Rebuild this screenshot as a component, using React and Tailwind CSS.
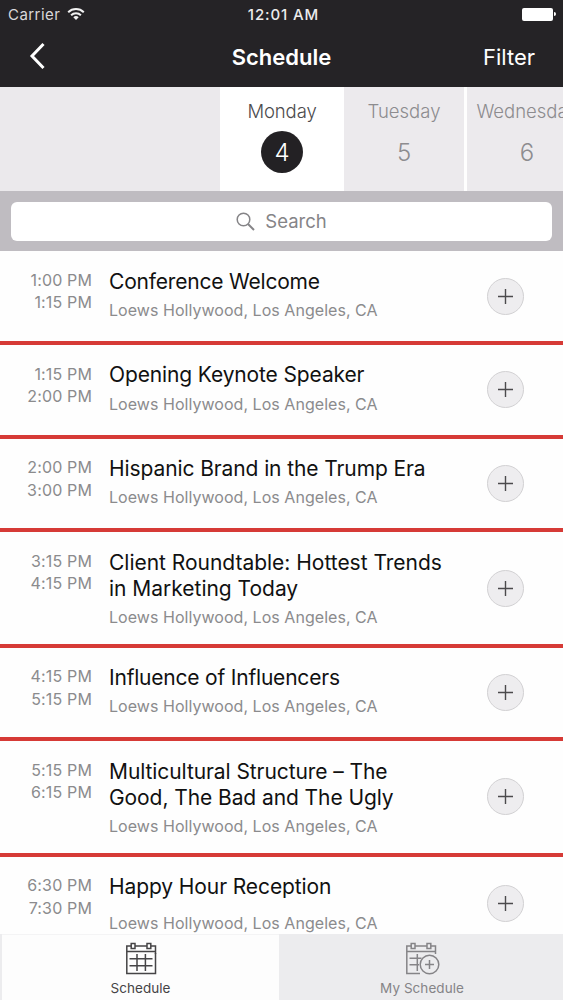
const sessions = [
  { start: '1:00 PM', end: '1:15 PM', title: ['Conference Welcome'], tracking: 'tracking-[-0.19px]' },
  { start: '1:15 PM', end: '2:00 PM', title: ['Opening Keynote Speaker'], tracking: 'tracking-[-0.13px]' },
  { start: '2:00 PM', end: '3:00 PM', title: ['Hispanic Brand in the Trump Era'], tracking: 'tracking-[-0.1px]' },
  { start: '3:15 PM', end: '4:15 PM', title: ['Client Roundtable: Hottest Trends', 'in Marketing Today'], tracking: 'tracking-[-0.02px]' },
  { start: '4:15 PM', end: '5:15 PM', title: ['Influence of Influencers'], tracking: 'tracking-[-0.2px]' },
  { start: '5:15 PM', end: '6:15 PM', title: ['Multicultural Structure – The', 'Good, The Bad and The Ugly'], tracking: 'tracking-[-0.08px]' },
  { start: '6:30 PM', end: '7:30 PM', title: ['Happy Hour Reception'], tracking: 'tracking-[-0.1px]' },
];

const days = [
  { name: 'Tuesday', date: 5, box: 'w-[120px]' },
  { name: 'Wednesday', date: 6, box: 'w-[120px] ml-[3px]' },
];

function StatusBar() {
  return (
    <div className="h-7 grid grid-cols-3 items-center text-[15px] leading-none">
      <div className="flex items-center gap-[7px] pl-2 text-[#d9d8da]">
        <span className="tracking-[0.45px]">Carrier</span>
        <svg width="18" height="14" viewBox="0 0 18 14" fill="none" stroke="#f2f2f2" strokeWidth="2">
          <path d="M1.2 5.2a11.2 11.2 0 0 1 15.6 0" />
          <path d="M4.1 8.3a7 7 0 0 1 9.8 0" />
          <path d="M9 12.9 6.3 10.2a3.9 3.9 0 0 1 5.4 0z" fill="#f2f2f2" stroke="none" />
        </svg>
      </div>
      <span className="pl-1 text-center font-medium tracking-[0.9px] text-[#ececec]">12:01 AM</span>
      <div className="flex items-center justify-end pr-[7px]">
        <span className="w-[31px] h-[13px] rounded-[2px] bg-white" />
        <span className="w-[2px] h-1 ml-px rounded-r bg-white" />
      </div>
    </div>
  );
}

function CalendarIcon({ add }) {
  return (
    <svg width="36" height="34" viewBox="0 0 36 34" fill="none" stroke="currentColor" strokeWidth="1.5">
      <path d="M6 4H1.8v27.5H15M10 4h12M26 4h4.5v8M1.8 9.5h28.7" />
      <rect x="6.2" y="1.5" width="3.8" height="5" />
      <rect x="22" y="1.5" width="3.8" height="5" />
      {add ? (
        <>
          <path d="M4.5 16.2h12M4.5 22.8h9.5M12.3 12v17" />
          <circle cx="24.5" cy="22.5" r="9.3" />
          <path d="M24.5 18v9M20 22.5h9" />
        </>
      ) : (
        <path d="M15 31.5h15.5V11M4.5 16.7h23M4.5 23.7h23M12 12v17M20.4 12v17" />
      )}
    </svg>
  );
}

function SessionRow({ session, last }) {
  const height = session.title.length > 1 ? 'h-[115.3px]' : 'h-[93.7px]';
  return (
    <li className={`flex ${height} ${last ? '' : 'border-b-4 border-[#d63a36]'}`}>
      <div className="w-[92px] pt-[17.7px] text-right text-base leading-[22.4px] tracking-[0.15px] text-[#8b8b8d]">
        <p>{session.start}</p>
        <p>{session.end}</p>
      </div>
      <div className="flex-1 pl-[17px] pt-[17.3px] whitespace-nowrap">
        <h2 className={`text-[21px] leading-[26px] text-[#111] ${session.tracking}`}>
          {session.title.map((line) => (
            <span key={line} className="block">{line}</span>
          ))}
        </h2>
        <p className={`text-base leading-5 tracking-[0.04px] text-[#8b8b8d] ${last ? 'mt-[13px]' : 'mt-[5.4px]'}`}>
          Loews Hollywood, Los Angeles, CA
        </p>
      </div>
      <button
        aria-label="Add to my schedule"
        className="self-center mr-[39px] size-[37px] rounded-full border border-[#d2d1d3] bg-[#eeedef] flex items-center justify-center"
      >
        <svg width="15" height="15" viewBox="0 0 15 15" stroke="#4b4a4c" strokeWidth="1.4">
          <path d="M7.5 0v15M0 7.5h15" />
        </svg>
      </button>
    </li>
  );
}

export default function App() {
  return (
    <div className="w-[563px] h-[1000px] flex flex-col overflow-hidden bg-[#fefefe] font-['Inter',sans-serif]">
      <header className="h-[87px] shrink-0 bg-[#252326] text-white">
        <StatusBar />
        <div className="h-[59px] grid grid-cols-3 items-center">
          <svg className="ml-[29px] -mt-1" width="18" height="28" viewBox="0 0 18 28" fill="none" stroke="#fff" strokeWidth="3">
            <path d="M14.5 2 3 14l11.5 12" />
          </svg>
          <h1 className="-mt-0.5 text-center text-[22px] font-semibold leading-none">Schedule</h1>
          <span className="-mt-0.5 pr-7 text-right text-[22px] leading-none">Filter</span>
        </div>
      </header>

      {/* Day picker */}
      <div className="h-[104px] shrink-0 flex overflow-hidden text-[18.5px] font-light">
        <div className="w-[220px] shrink-0 bg-[#ebe9ec]" />
        <div className="w-[124px] shrink-0 flex flex-col items-center pt-3 bg-white text-[#4c4b4d]">
          <span className="leading-6 tracking-[-0.1px]">Monday</span>
          <span className="mt-2 size-[42px] pt-px rounded-full bg-[#232124] text-white text-2xl flex items-center justify-center">4</span>
        </div>
        {days.map((day) => (
          <div key={day.name} className={`${day.box} shrink-0 flex flex-col items-center pt-3 bg-[#eceaed] text-[#8d8c8f]`}>
            <span className="leading-6">{day.name}</span>
            <span className="mt-2 h-[42px] pt-0.5 text-2xl flex items-center">{day.date}</span>
          </div>
        ))}
      </div>

      {/* Search */}
      <div className="h-[60.3px] shrink-0 px-[11px] pt-[11px] bg-[#bfbcc1]">
        <div className="h-[39px] rounded-md bg-white flex items-center justify-center gap-2.5 text-[18.5px] text-[#858487]">
          <svg width="19" height="19" viewBox="0 0 19 19" fill="none" stroke="currentColor" strokeWidth="1.5">
            <circle cx="7.5" cy="7.5" r="6.3" />
            <path d="m12 12 6 6" strokeWidth="2" />
          </svg>
          <span>Search</span>
        </div>
      </div>

      <ul className="h-[682.7px] shrink-0 overflow-hidden">
        {sessions.map((session, i) => (
          <SessionRow key={session.start} session={session} last={i === sessions.length - 1} />
        ))}
      </ul>

      <nav className="h-[66px] shrink-0 flex bg-[#ececee] text-[13.5px] leading-4">
        <a href="#" className="ml-[2px] w-[277px] bg-[#fdfdfd] border-t border-[#f4f4f5] pt-[7px] flex flex-col items-center text-[#454446]">
          <span className="pl-[4px]"><CalendarIcon /></span>
          <span className="mt-1 tracking-[0.05px]">Schedule</span>
        </a>
        <a href="#" className="flex-1 pt-2 flex flex-col items-center text-[#858487]">
          <span className="pl-[3px]"><CalendarIcon add /></span>
          <span className="mt-1 pl-0.5 tracking-[0.05px]">My Schedule</span>
        </a>
      </nav>
    </div>
  );
}
